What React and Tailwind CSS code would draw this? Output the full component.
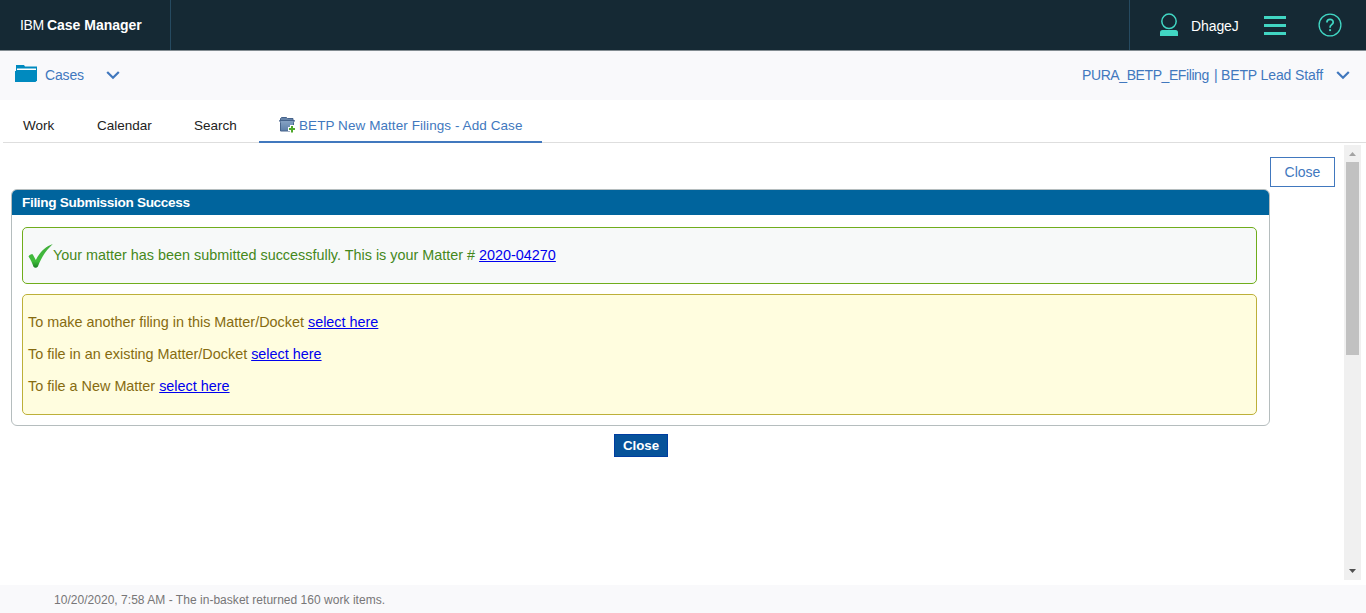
import React from "react";

function Chevron() {
  return (
    <svg className="block h-[10px] w-[14px]" viewBox="0 0 14 10" fill="none" stroke="#4178be" strokeWidth="2.200">
      <path d="M1.200 2 7 7.800 12.800 2" />
    </svg>
  );
}

function FolderIcon() {
  return (
    <svg className="block h-[17px] w-[22px]" viewBox="0 0 22 17">
      <path d="M1 0h8l1 1.500H22V15H1z" fill="#008abf" />
      <path d="M2 3.500h19v1.500H2z" fill="#fff" />
      <path d="M0 6h22v9.500L20.500 17H0z" fill="#008abf" />
    </svg>
  );
}

function AddCaseIcon() {
  return (
    <svg className="block h-4 w-4 shrink-0" viewBox="0 0 16 16">
      <defs>
        <linearGradient id="caseFill" x1="0" y1="0" x2="0" y2="1">
          <stop offset="0" stopColor="#87a3c5" />
          <stop offset="1" stopColor="#5d7fa8" />
        </linearGradient>
      </defs>
      <path d="M1.500 4V1.500l1-1h5l1 1h5.500V4z" fill="#6684aa" stroke="#46638b" />
      <path d="M.5 3.500h15l-1 2V14h-13V5.500z" fill="url(#caseFill)" stroke="#46638b" />
      <path d="M11 8h4v2h1v4h-1v2h-4v-2H9v-4h2z" fill="#fff" />
      <path d="M12 9h2v2h2v2h-2v2.500h-2V13h-2v-2h2z" fill="#4fa82b" />
    </svg>
  );
}

function UserIcon() {
  return (
    <svg className="block h-6 w-[18px]" viewBox="0 0 18 24">
      <circle cx="9" cy="8.300" r="7.200" fill="none" stroke="#41d6c3" strokeWidth="1.500" />
      <path d="M0 23v-3.500Q0 17 2.500 17h13q2.500 0 2.500 2.500V23z" fill="#41d6c3" />
    </svg>
  );
}

function HelpIcon() {
  return (
    <svg className="block h-6 w-6" viewBox="0 0 24 24" fill="none" stroke="#41d6c3">
      <circle cx="12" cy="12" r="10.900" strokeWidth="1.300" />
      <path d="M8.900 9.600c0-4.300 6.500-4.100 6.300-.2-.1 2.200-3.100 2.400-3.100 4.700v.6" strokeWidth="1.700" />
      <path d="M12.100 16.200v1.900" strokeWidth="1.900" />
    </svg>
  );
}

function CheckIcon() {
  return (
    <svg className="block h-6 w-[25px]" viewBox="0 0 25 24">
      <defs>
        <linearGradient id="tick" x1="0" y1="0" x2="0" y2="1">
          <stop offset="0" stopColor="#43ad3d" />
          <stop offset=".72" stopColor="#3fbd3b" />
          <stop offset="1" stopColor="#187f22" />
        </linearGradient>
      </defs>
      <path d="M.5 12.500C1.500 10.800 3 10 4.700 10.300L7.800 16C12 7.800 17 3 24.800 0 18 6.500 13.800 12.500 10 22.300c-1 1.800-3.300 2-4.500.4C4.200 19 2.500 15.500.5 12.500z" fill="url(#tick)" />
    </svg>
  );
}

function Link({ children }) {
  return <a href="#" className="text-[#0000ee] underline">{children}</a>;
}

export default function App() {
  return (
    <div className="flex h-[613px] w-[1366px] flex-col overflow-hidden bg-white font-['Liberation_Sans',Arial,sans-serif] text-sm leading-4">
      <header className="flex h-[51px] shrink-0 border-b border-[#838c91] bg-[#152934] text-white">
        <div className="flex w-[171px] items-center border-r border-[#264a60] pl-5">
          <span className="w-[27px] tracking-[-0.4px]">IBM</span>
          <b className="whitespace-nowrap text-sm leading-4 tracking-[-0.02px]">Case Manager</b>
        </div>
        <div className="ml-auto flex w-[237px] items-center border-l border-[#264a60] pl-[30px]">
          <UserIcon />
          <span className="ml-[13px] w-[60px] pt-0.5 tracking-[-0.1px]">DhageJ</span>
          <div className="ml-[13px] flex w-[22px] flex-col gap-[5px]">
            <i className="h-[3px] bg-[#41d6c3]" />
            <i className="h-[3px] bg-[#41d6c3]" />
            <i className="h-[3px] bg-[#41d6c3]" />
          </div>
          <div className="ml-8"><HelpIcon /></div>
        </div>
      </header>

      <div className="flex h-[49px] shrink-0 items-center bg-[#f9f9fb] pb-px pl-[15px] text-[#4178be]">
        <div className="-mt-1"><FolderIcon /></div>
        <span className="ml-2 w-[61px] tracking-[-0.15px]">Cases</span>
        <Chevron />
        <div className="ml-auto flex items-center pr-4">
          <span className="w-[132px] whitespace-nowrap tracking-[-0.41px]">PURA_BETP_EFiling</span>
          <span className="w-[7px]">|</span>
          <span className="w-[115px] whitespace-nowrap tracking-[-0.12px]">BETP Lead Staff</span>
          <Chevron />
        </div>
      </div>

      <nav className="ml-[3px] flex h-[43px] shrink-0 border-b border-[#dedede] text-[13.500px] text-[#222]">
        <div className="w-[74px] pl-5 pt-[18px]">Work</div>
        <div className="w-[97px] pl-5 pt-[18px]">Calendar</div>
        <div className="w-[85px] pl-5 pt-[18px]">Search</div>
        <div className="flex h-[43px] w-[283px] border-b-2 border-[#4178be] pl-5 pt-[17px] text-[#4178be]">
          <AddCaseIcon />
          <span className="ml-1 mt-px whitespace-nowrap tracking-[0.07px]">BETP New Matter Filings - Add Case</span>
        </div>
      </nav>

      <div className="flex h-[442px] shrink-0 pl-[11px]">
        <main className="w-[1259px] pt-[46px]">
          <section className="h-[237px] overflow-hidden rounded-[6px] border border-[#b5bdbe]">
            <h1 className="h-[25px] bg-[#00649d] pl-[10px] pt-[5px] text-[13.600px] font-bold leading-4 tracking-[-0.33px] text-white">Filing Submission Success</h1>
            <div className="ml-[10px] mt-3 flex h-[57px] w-[1235px] rounded-[5px] border border-[#70ad1c] bg-[#f7f9f9] pl-[5px] text-[14.400px] text-[#45881b]">
              <div className="pt-4"><CheckIcon /></div>
              <p className="pt-[19px]">Your matter has been submitted successfully. This is your Matter # <Link>2020-04270</Link></p>
            </div>
            <div className="ml-[10px] mt-[10px] flex h-[121px] w-[1235px] flex-col gap-4 rounded-[5px] border border-[#bdb039] bg-[#fffddf] pl-[5px] pt-[19px] text-[14.400px] text-[#866b10]">
              <p>To make another filing in this Matter/Docket <Link>select here</Link></p>
              <p>To file in an existing Matter/Docket <Link>select here</Link></p>
              <p>To file a New Matter <Link>select here</Link></p>
            </div>
          </section>
          <button className="ml-[603px] mt-2 block h-[23px] w-[54px] border border-[#003da0] bg-[#07539a] text-[13.300px] font-bold leading-[21px] text-white">Close</button>
        </main>
        <button className="mt-[14px] h-[30px] w-[65px] border border-[#4178be] bg-white text-[#4178be]">Close</button>
        <div className="ml-[9px] mt-0.5 flex h-[435px] w-[17px] flex-col items-center bg-[#f0f0f0]">
          <svg className="h-[17px] w-[17px] shrink-0" viewBox="0 0 17 17"><path d="M5 11 8.500 7l3.500 4z" fill="#a3a3a3" /></svg>
          <div className="h-[193px] w-[13px] bg-[#c1c1c1]" />
          <svg className="mt-auto h-[17px] w-[17px] shrink-0" viewBox="0 0 17 17"><path d="M5 6h7l-3.500 4z" fill="#505050" /></svg>
        </div>
      </div>

      <footer className="flex h-7 shrink-0 items-center bg-[#f9f9fb] pl-[54px] pt-0.5 text-xs tracking-[0.03px] text-[#777677]">10/20/2020, 7:58 AM - The in-basket returned 160 work items.</footer>
    </div>
  );
}
